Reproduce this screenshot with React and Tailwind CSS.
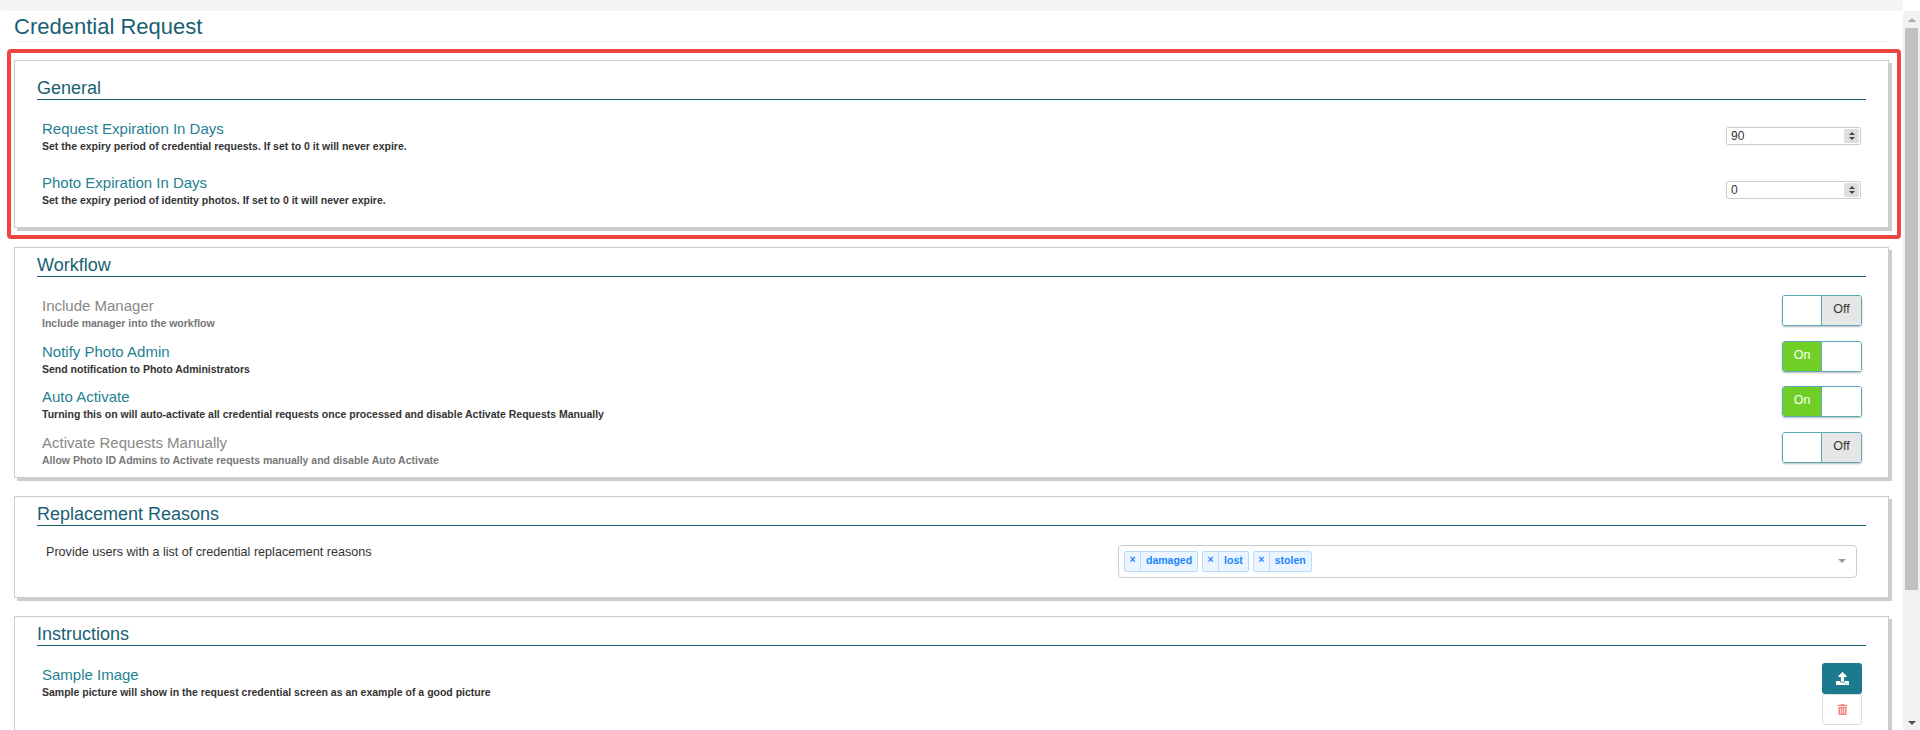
import { FaUpload, FaTrashAlt } from 'react-icons/fa'

const font = { fontFamily: '"Liberation Sans", Arial, sans-serif' }

function Card({ title, className = '', children }) {
  return (
    <section className={`border border-[#ccc] bg-white shadow-[3px_3px_0_#ccc] ${className}`}>
      <h2 className="mx-[22px] border-b border-[#1a5f73] text-[18px] leading-[21px] text-[#1a5f73]">{title}</h2>
      {children}
    </section>
  )
}

function NumberInput({ value }) {
  return (
    <div className="mr-px mt-[7px] flex h-[18px] w-[135px] items-center justify-between rounded-[2px] border border-[#ccc] pl-[4px] pr-px">
      <span className="text-[12px] text-[#333]">{value}</span>
      <div className="flex h-[14px] w-[15px] flex-col items-center justify-center gap-[2px] rounded-[2px] bg-[#dedede]">
        <span className="h-0 w-0 border-x-[3px] border-b-[3px] border-x-transparent border-b-[#444]" />
        <span className="h-0 w-0 border-x-[3px] border-t-[3px] border-x-transparent border-t-[#444]" />
      </div>
    </div>
  )
}

function Toggle({ on }) {
  return (
    <div className="flex h-[31px] w-[80px] overflow-hidden rounded-[3px] border border-[#5ba8b8] shadow-[0_1px_2px_#bbb]">
      <div className={`flex w-[39px] items-center justify-center border-r border-[#5ba8b8] pb-[2px] text-[12.5px] ${on ? 'bg-[#70cf24] text-white' : 'bg-white'}`}>
        {on ? 'On' : ''}
      </div>
      <div className={`flex flex-1 items-center justify-center pb-[2px] text-[12.5px] text-[#333] ${on ? 'bg-white' : 'bg-[#e6e6e6]'}`}>
        {on ? '' : 'Off'}
      </div>
    </div>
  )
}

function Setting({ label, desc, muted, className = '', textClass = '', children }) {
  return (
    <div className={`flex items-start justify-between pl-[5px] pr-[4px] ${className}`}>
      <div className={textClass}>
        <div className={`text-[15px] leading-[17px] ${muted ? 'text-[#888]' : 'text-[#1f7f93]'}`}>{label}</div>
        <div className={`mt-[3px] text-[10.5px] font-bold leading-[12px] ${muted ? 'text-[#777]' : 'text-[#333]'}`}>{desc}</div>
      </div>
      {children}
    </div>
  )
}

function Tag({ label }) {
  return (
    <div className="flex h-[21px] items-center rounded-[2px] border border-[#b8dcff] bg-[#ebf5ff] text-[10.5px] font-bold text-[#1a85ff]">
      <span className="flex h-full w-[16px] items-center justify-center border-r border-[#b8dcff] pb-[3px]">×</span>
      <span className="px-[5px]">{label}</span>
    </div>
  )
}

export default function App() {
  return (
    <div className="flex h-[730px] overflow-hidden bg-white text-[#333]" style={font}>
      <div className="min-w-0 flex-1">
        <div className="h-[11px] overflow-hidden rounded-b-[3px] bg-[#f4f4f4]" />
        <main className="pl-[14px] pr-[14px]">
          <h1 className="border-b border-[#eee] pb-[3px] pt-[4px] text-[22px] leading-[23px] text-[#1a5f73]">Credential Request</h1>

          <div className="relative mt-[18px]">
            <Card title="General" className="h-[168px] pt-[17px]">
              <div className="mx-[22px] pt-[20px]">
                <Setting label="Request Expiration In Days" desc="Set the expiry period of credential requests. If set to 0 it will never expire.">
                  <NumberInput value="90" />
                </Setting>
                <Setting className="mt-[22px]" label="Photo Expiration In Days" desc="Set the expiry period of identity photos. If set to 0 it will never expire.">
                  <NumberInput value="0" />
                </Setting>
              </div>
            </Card>
            <div className="pointer-events-none absolute bottom-[-11px] left-[-7px] right-[-12px] top-[-11px] rounded-[4px] border-[4px] border-[#ef4444]" />
          </div>

          <Card title="Workflow" className="mt-[19px] h-[231px] pt-[7px]">
            <div className="mx-[22px] flex flex-col gap-[14.67px] pt-[18px]">
              <Setting muted textClass="h-[31px] pt-[2px]" label="Include Manager" desc="Include manager into the workflow">
                <Toggle />
              </Setting>
              <Setting textClass="h-[31px] pt-[2px]" label="Notify Photo Admin" desc="Send notification to Photo Administrators">
                <Toggle on />
              </Setting>
              <Setting textClass="h-[31px] pt-[2px]" label="Auto Activate" desc="Turning this on will auto-activate all credential requests once processed and disable Activate Requests Manually">
                <Toggle on />
              </Setting>
              <Setting muted textClass="h-[31px] pt-[2px]" label="Activate Requests Manually" desc="Allow Photo ID Admins to Activate requests manually and disable Auto Activate">
                <Toggle />
              </Setting>
            </div>
          </Card>

          <Card title="Replacement Reasons" className="mt-[18px] h-[102px] pt-[7px]">
            <div className="flex items-start pl-[31px] pr-[31px] pt-[19px]">
              <div className="w-[1072px] pt-px text-[12.6px] leading-[13px]">Provide users with a list of credential replacement reasons</div>
              <div className="flex h-[33px] flex-1 items-center justify-between rounded-[4px] border border-[#ccc] pb-px pl-[5px] pr-[10px]">
                <div className="flex gap-[4px]">
                  <Tag label="damaged" />
                  <Tag label="lost" />
                  <Tag label="stolen" />
                </div>
                <span className="h-0 w-0 border-x-[4px] border-t-[4px] border-x-transparent border-t-[#999]" />
              </div>
            </div>
          </Card>

          <Card title="Instructions" className="mt-[18px] h-[200px] pt-[7px]">
            <div className="mx-[22px] pt-[18px]">
              <Setting textClass="pt-[2px]" label="Sample Image" desc="Sample picture will show in the request credential screen as an example of a good picture">
                <div className="-mt-px flex flex-col">
                  <button className="flex h-[31px] w-[40px] items-center justify-center rounded-[3px] bg-[#1c7a8f] text-white">
                    <FaUpload size={13} />
                  </button>
                  <button className="flex h-[31px] w-[40px] items-center justify-center rounded-[3px] border border-[#ddd] bg-white text-[#f28b82]">
                    <FaTrashAlt size={11} />
                  </button>
                </div>
              </Setting>
            </div>
          </Card>
        </main>
      </div>

      <div className="mt-[11px] flex h-[719px] w-[17px] flex-col items-center bg-[#f1f1f1]">
        <span className="mt-[7px] h-0 w-0 border-x-[4px] border-b-[4px] border-x-transparent border-b-[#a8a8a8]" />
        <div className="mt-[6px] h-[562px] w-[13px] bg-[#c1c1c1]" />
        <span className="mt-auto mb-[5px] h-0 w-0 border-x-[4px] border-t-[4px] border-x-transparent border-t-[#505050]" />
      </div>
    </div>
  )
}
